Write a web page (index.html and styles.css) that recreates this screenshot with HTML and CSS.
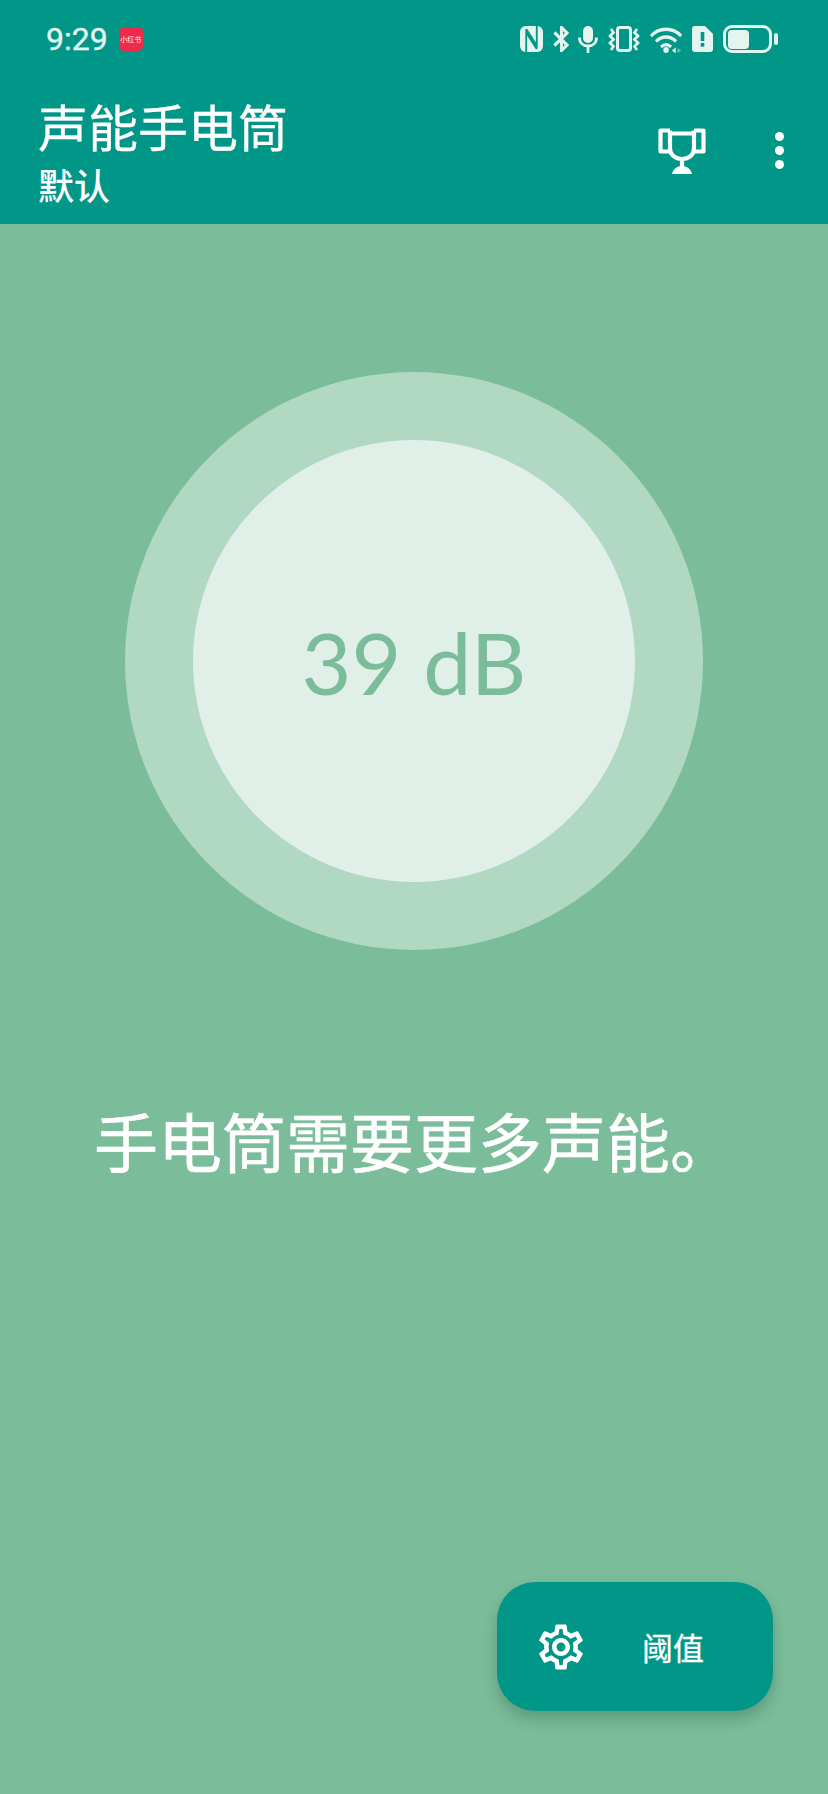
FILE: index.html
```html
<!DOCTYPE html>
<html lang="zh">

<head>
    <meta charset="UTF-8">
    <meta name="viewport" content="width=device-width, initial-scale=1.0" />
    <title>声能手电筒</title>
    <link rel="stylesheet" href="styles.css">
</head>

<body>
    <header class="top">
        <div class="status">
            <span class="time">9:29</span>
            <span class="app-badge">小红书</span>
            <div class="status-icons">
                <!-- nfc -->
                <svg width="23" height="26" viewBox="0 0 24 26" preserveAspectRatio="none">
                    <rect x="0" y="0" width="24" height="26" rx="6" fill="#e4f4ef" />
                    <path d="M6.500 26V6.500L17.500 23M17.500 0V19.500L6.500 3" fill="none" stroke="#009688" stroke-width="1.900" />
                </svg>
                <!-- bluetooth -->
                <svg width="16" height="26" viewBox="0 0 17 26" preserveAspectRatio="none">
                    <path d="M1.500 6.500l13.500 12.500-6 5.500V1.500l6 5.500-13.500 12.500" fill="none" stroke="#e4f4ef" stroke-width="3.200" />
                </svg>
                <!-- mic -->
                <svg width="20" height="27" viewBox="0 0 20 27">
                    <rect x="5" y="0" width="10" height="17" rx="5" fill="#e4f4ef" />
                    <path d="M1.500 11.500c0 5.500 3.500 8.500 8.500 8.500s8.500-3 8.500-8.500M10 20v7" fill="none" stroke="#e4f4ef" stroke-width="2.800" />
                </svg>
                <!-- vibrate -->
                <svg width="32" height="26" viewBox="0 0 32 26">
                    <rect x="9.500" y="1.500" width="13" height="23" rx="2.500" fill="none" stroke="#e4f4ef" stroke-width="3" />
                    <path d="M3 3l2.500 3.500L2 10l3.500 3.500L2 17l3.500 3.500L3 24M29 3l-2.500 3.500L30 10l-3.500 3.500L30 17l-3.500 3.500L29 24" fill="none" stroke="#e4f4ef" stroke-width="2.700" />
                </svg>
                <!-- wifi -->
                <svg width="33" height="27" viewBox="0 0 36 27" preserveAspectRatio="none">
                    <path d="M1 10C10 1 25 1 34 10M6.500 15.500c6.500-6 15.500-6 22 0M12 21c3.500-3 7.500-3 11 0" fill="none" stroke="#e4f4ef" stroke-width="3.300" />
                    <circle cx="17.500" cy="24" r="3" fill="#e4f4ef" />
                    <path d="M24 24.500l4-3v6z" fill="#e4f4ef" />
                    <path d="M30 22l4 2.500-4 2.500z" fill="#6fbcab" />
                </svg>
                <!-- sim -->
                <svg width="21" height="26" viewBox="0 0 21 26">
                    <path d="M3 0h10l8 8v15a3 3 0 0 1-3 3H3a3 3 0 0 1-3-3V3a3 3 0 0 1 3-3z" fill="#e4f4ef" />
                    <rect x="8.700" y="6" width="3.600" height="9" fill="#009688" />
                    <rect x="8.700" y="17" width="3.600" height="3.600" fill="#009688" />
                </svg>
                <!-- battery -->
                <div class="battery">
                    <div class="battery-level"></div>
                </div>
                <div class="battery-nub"></div>
            </div>
        </div>
        <div class="toolbar">
            <div class="titles">
                <h1>声能手电筒</h1>
                <h2>默认</h2>
            </div>
            <svg class="trophy" width="48" height="48" viewBox="0 0 48 48">
                <path d="M12 3.500H2.500v21H12M36 3.500h9.500v21H36M12 6.500h24M12 3.500v18c0 6 5 10.500 12 10.500s12-4.500 12-10.500v-18M24 32v9" fill="none" stroke="#fff" stroke-width="4.200" stroke-linejoin="round" />
                <path d="M14 47c1-5 5-8 10-8s9 3 10 8z" fill="#fff" />
            </svg>
            <div class="dots"><i></i><i></i><i></i></div>
        </div>
    </header>

    <main class="content">
        <div class="ring">
            <div class="disc">39 dB</div>
        </div>
        <p class="message">手电筒需要更多声能。</p>
        <button type="button" class="fab">
            <svg width="54" height="54" viewBox="0 0 24 24">
                <path d="M19.430 12.980c.04-.32.070-.64.070-.98s-.03-.66-.07-.98l2.110-1.650c.19-.15.240-.42.120-.64l-2-3.460c-.12-.22-.39-.3-.61-.22l-2.490 1c-.52-.4-1.080-.73-1.690-.98l-.38-2.650A.488.488 0 0 0 14 2h-4c-.25 0-.46.18-.49.420l-.38 2.650c-.61.25-1.170.59-1.690.98l-2.490-1c-.23-.09-.49 0-.61.220l-2 3.460c-.13.220-.07.490.12.640l2.110 1.650c-.04.320-.07.650-.07.980s.03.660.07.980l-2.110 1.650c-.19.150-.24.420-.12.640l2 3.460c.12.220.39.300.61.220l2.490-1c.52.400 1.080.730 1.690.980l.38 2.650c.03.240.24.420.49.420h4c.25 0 .46-.18.49-.42l.38-2.650c.61-.25 1.170-.59 1.690-.98l2.490 1c.23.090.49 0 .61-.22l2-3.460c.12-.22.070-.49-.12-.64l-2.110-1.650zM17.450 11.270c.04.310.05.520.05.730s-.02.430-.05.730l-.14 1.130.89.700 1.080.840-.7 1.210-1.270-.51-1.040-.42-.9.680c-.43.320-.84.560-1.250.730l-1.060.430-.16 1.130-.2 1.350h-1.400l-.19-1.350-.16-1.130-1.060-.43c-.43-.18-.83-.41-1.230-.71l-.91-.7-1.060.43-1.270.51-.7-1.210 1.080-.84.890-.7-.14-1.130c-.03-.31-.05-.54-.05-.74s.02-.43.05-.73l.14-1.130-.89-.7-1.080-.84.7-1.210 1.270.51 1.040.42.900-.68c.43-.32.840-.56 1.250-.73l1.060-.43.160-1.130.2-1.350h1.390l.19 1.350.16 1.130 1.060.43c.43.18.83.41 1.230.71l.91.700 1.060-.43 1.270-.51.7 1.210-1.070.85-.89.700.14 1.130zM12 8c-2.210 0-4 1.790-4 4s1.790 4 4 4 4-1.790 4-4-1.790-4-4-4zm0 6c-1.100 0-2-.9-2-2s.9-2 2-2 2 .9 2 2-.9 2-2 2z" fill="#fff" />
            </svg>
            <span class="fab-label">阈值</span>
        </button>
    </main>
</body>

</html>
```

FILE: styles.css
```css
* {
    box-sizing: border-box;
    margin: 0;
    padding: 0;
}

body {
    width: 828px;
    height: 1794px;
    overflow: hidden;
    display: flex;
    flex-direction: column;
    background: #7bbc9a;
    font-family: Roboto, "Noto Sans CJK SC", sans-serif;
    color: #fff;
}

.top {
    height: 224px;
    background: #009688;
    flex-shrink: 0;
}

.status {
    height: 78px;
    display: flex;
    align-items: center;
    padding: 0 50px 0 46px;
}

.time {
    font-size: 32px;
    font-weight: 400;
    -webkit-text-stroke: 0.4px #e4f7f2;
    color: #e4f7f2;
}

.app-badge {
    width: 24px;
    height: 24px;
    margin-left: 11px;
    border-radius: 5px;
    background: #ee2a4a;
    color: #fff;
    font-size: 7px;
    line-height: 24px;
    text-align: center;
    white-space: nowrap;
    font-family: "Noto Sans CJK SC", sans-serif;
}

.status-icons {
    margin-left: auto;
    display: flex;
    align-items: center;
    gap: 9.700px;
}

.battery {
    width: 49px;
    height: 28px;
    padding: 1.500px;
    border: 3px solid #e4f4ef;
    border-radius: 9px;
}

.battery-level {
    width: 21px;
    height: 100%;
    border-radius: 4px;
    background: #e4f4ef;
}

.battery-nub {
    width: 4px;
    height: 12px;
    margin-left: -7.700px;
    border-radius: 2px;
    background: #e4f4ef;
}

.toolbar {
    height: 146px;
    display: flex;
    align-items: center;
    padding: 0 0 0 38px;
}

.titles {
    flex: 1;
    font-family: "Noto Sans CJK SC", sans-serif;
}

h1 {
    font-size: 50px;
    font-weight: 400;
    line-height: 60px;
    -webkit-text-stroke: 0.3px #fff;
}

h2 {
    margin-top: 6px;
    font-size: 36px;
    font-weight: 500;
    line-height: 46px;
}

.trophy {
    margin-right: 69px;
}

.dots {
    width: 9px;
    margin: 0 44px 2px 0;
    display: flex;
    flex-direction: column;
    gap: 5px;
}

.dots i {
    width: 9px;
    height: 9px;
    border-radius: 50%;
    background: #fff;
}

.content {
    flex: 1;
    display: flex;
    flex-direction: column;
    align-items: center;
    position: relative;
}

.ring {
    width: 578px;
    height: 578px;
    margin-top: 148px;
    border-radius: 50%;
    background: #b0d8c2;
    display: flex;
    align-items: center;
    justify-content: center;
}

.disc {
    width: 442px;
    height: 442px;
    border-radius: 50%;
    background: #e0efe8;
    color: #7bbc9a;
    font-family: Lato, sans-serif;
    font-size: 86px;
    display: flex;
    align-items: center;
    justify-content: center;
}

.message {
    margin-top: 148px;
    font-family: "Noto Sans CJK SC", sans-serif;
    font-size: 64px;
    font-weight: 400;
    -webkit-text-stroke: 0.6px #fff;
    line-height: 82px;
    white-space: nowrap;
}

.fab {
    position: absolute;
    right: 55px;
    bottom: 83px;
    width: 276px;
    height: 129px;
    border: 0;
    border-radius: 38px;
    background: #009688;
    box-shadow: 0 8px 14px rgba(0, 60, 40, 0.25);
    color: #fff;
    display: flex;
    align-items: center;
    padding-left: 37px;
}

.fab-label {
    margin-left: 54px;
    font-family: "Noto Sans CJK SC", sans-serif;
    font-size: 31px;
    font-weight: 400;
    -webkit-text-stroke: 0.3px #fff;
}
```
